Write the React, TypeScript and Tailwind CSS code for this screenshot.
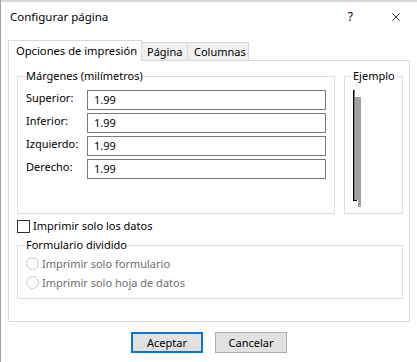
import { X } from 'lucide-react';

const margins = [
  { label: 'Superior:', value: '1.99' },
  { label: 'Inferior:', value: '1.99' },
  { label: 'Izquierdo:', value: '1.99' },
  { label: 'Derecho:', value: '1.99' },
];

function Radio({ label }: { label: string }) {
  return (
    <div className="flex items-center h-[19px]">
      <span className="w-[13px] h-[13px] rounded-full border border-[#cccccc] bg-[#fcfcfc]" />
      <span className="ml-[3px] text-[#6d6d6d]">{label}</span>
    </div>
  );
}

export default function App() {
  return (
    <div className="w-[417px] h-[362px] bg-white border-l border-[#a0a0a0] flex flex-col text-[11px] leading-[16px] text-black font-['Noto_Sans',sans-serif] overflow-hidden whitespace-nowrap">
      {/* strip of the window behind */}
      <div className="h-[2px] bg-[#d8d8d8] shrink-0" />

      {/* Title bar */}
      <div className="h-[30px] flex items-center pl-[9px] shrink-0 text-[11.5px]">
        <span className="flex-1">Configurar página</span>
        <span className="mr-[36px] text-[12px]">?</span>
        <X className="w-[14px] h-[14px] mr-[14px]" strokeWidth={1.3} />
      </div>

      <div className="px-[7px] mt-[8px]">
        {/* Tabs */}
        <div className="flex items-end h-[20px]">
          <div className="relative z-10 h-[21px] -mb-px w-[134px] bg-white border border-b-0 border-[#d9d9d9] flex items-center pl-[7px] text-[11.2px]">
            Opciones de impresión
          </div>
          <div className="h-[18px] -ml-px w-[47px] bg-[#f0f0f0] border border-b-0 border-[#d9d9d9] flex items-center pl-[5px]">
            Página
          </div>
          <div className="h-[18px] -ml-px w-[62px] bg-[#f0f0f0] border border-b-0 border-[#d9d9d9] flex items-center pl-[6px]">
            Columnas
          </div>
        </div>

        {/* Panel */}
        <div className="h-[262px] border border-[#d9d9d9] pl-[8px] pt-[7px]">
          <div className="flex gap-[9px]">
            <fieldset className="w-[318px] h-[146px] border border-[#dcdcdc]">
              <legend className="ml-[7px] px-[1px]">Márgenes (milímetros)</legend>
              <div className="flex flex-col gap-[3px] pt-[6px] pl-[8px]">
                {margins.map((m) => (
                  <div key={m.label} className="flex items-start">
                    <span className="w-[61px]">{m.label}</span>
                    <div className="w-[239px] h-[20px] border border-[#7a7a7a] flex items-center pl-[6px]">
                      {m.value}
                    </div>
                  </div>
                ))}
              </div>
            </fieldset>

            <fieldset className="w-[59px] h-[146px] border border-[#dcdcdc]">
              <legend className="ml-[6px] px-[2px]">Ejemplo</legend>
              <svg width="10" height="118" className="ml-[8px] mt-[6px]" viewBox="0 0 10 118">
                <rect x="2" y="7" width="6" height="103" fill="#a0a0a0" />
                <rect x="5" y="110" width="3" height="7" fill="#a0a0a0" />
                <rect x="0" y="0" width="1.5" height="111" fill="#000" />
                <rect x="0" y="110" width="4" height="1" fill="#000" />
              </svg>
            </fieldset>
          </div>

          {/* Checkbox */}
          <div className="flex items-center mt-[4px] h-[16px]">
            <span className="w-[13px] h-[13px] border border-[#333333] bg-white" />
            <span className="ml-[3px]">Imprimir solo los datos</span>
          </div>

          <fieldset className="w-[386px] h-[62px] mt-[3px] border border-[#dcdcdc]">
            <legend className="ml-[7px] px-[1px]">Formulario dividido</legend>
            <div className="flex flex-col pl-[8px] pt-[1px]">
              <Radio label="Imprimir solo formulario" />
              <Radio label="Imprimir solo hoja de datos" />
            </div>
          </fieldset>
        </div>
      </div>

      {/* Buttons */}
      <div className="flex justify-center gap-[12px] mt-[10px]">
        <button className="w-[72px] h-[21px] bg-[#e1e1e1] border-2 border-[#0078d7] flex items-center justify-center">
          Aceptar
        </button>
        <button className="w-[72px] h-[21px] bg-[#e1e1e1] border border-[#adadad] flex items-center justify-center">
          Cancelar
        </button>
      </div>
    </div>
  );
}
